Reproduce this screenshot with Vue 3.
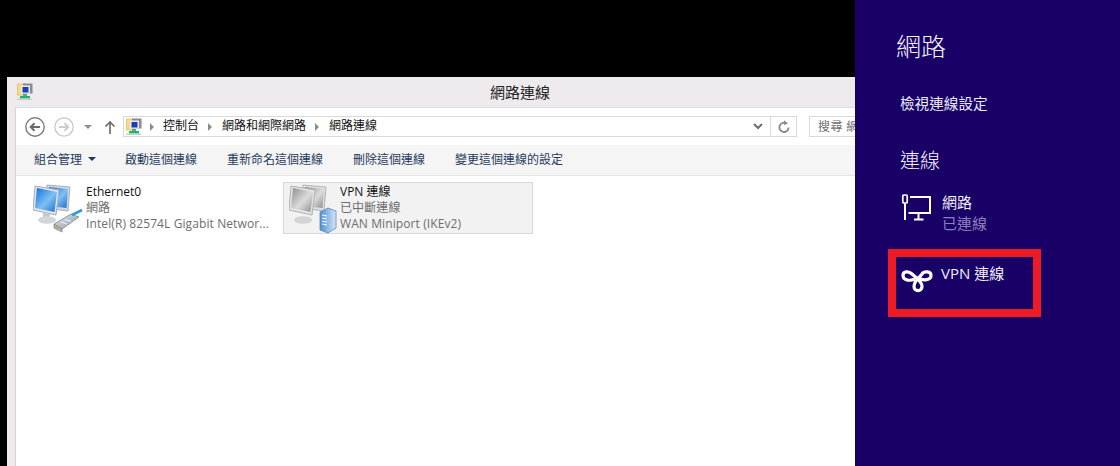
<script setup>
const cmds = ['啟動這個連線', '重新命名這個連線', '刪除這個連線', '變更這個連線的設定']
</script>

<template>
  <div class="screen">
    <div class="left">
      <div class="window">
        <div class="titlebar">
          <svg class="appicon" width="16" height="17" viewBox="0 0 16 17">
            <rect x="0.5" y="1" width="8" height="11" fill="#f6dd85" stroke="#d9b95a" stroke-width="0.7" />
            <rect x="6" y="0.5" width="9.5" height="10" fill="#8a8a94" />
            <rect x="4" y="2.5" width="9" height="8" fill="#e8ecf2" />
            <rect x="5.5" y="4" width="6" height="5.5" fill="#1a3fb4" />
            <rect x="6" y="11" width="4" height="2" fill="#5a8" />
            <rect x="3" y="13" width="10" height="2.5" fill="#1fb36b" />
            <rect x="0" y="15.5" width="15" height="1.5" fill="#c8ccd0" />
          </svg>
          <span class="title">網路連線</span>
        </div>
        <div class="client">
          <div class="navbar">
            <svg class="nav-back" width="22" height="22" viewBox="0 0 22 22">
              <circle cx="11" cy="11" r="9.2" fill="#fff" stroke="#7c7c7c" stroke-width="1.4" />
              <path d="M16 11H7M10.5 7.2 6.7 11l3.8 3.8" fill="none" stroke="#6a6a6a" stroke-width="2" />
            </svg>
            <svg class="nav-fwd" width="22" height="22" viewBox="0 0 22 22">
              <circle cx="11" cy="11" r="9.2" fill="#fff" stroke="#c8c8c8" stroke-width="1.3" />
              <path d="M6 11h9M11.5 7.2 15.3 11l-3.8 3.8" fill="none" stroke="#cdcdcd" stroke-width="2" />
            </svg>
            <span class="nav-drop"></span>
            <svg class="nav-up" width="12" height="14" viewBox="0 0 12 14">
              <path d="M6 14V2M1.5 6.5 6 2l4.5 4.5" fill="none" stroke="#6f6f6f" stroke-width="1.7" />
            </svg>
            <div class="address">
              <svg class="addr-icon" width="16" height="17" viewBox="0 0 16 17">
                <rect x="0.5" y="1" width="8" height="11" fill="#f6dd85" stroke="#d9b95a" stroke-width="0.7" />
                <rect x="6" y="0.5" width="9.5" height="10" fill="#8a8a94" />
                <rect x="4" y="2.5" width="9" height="8" fill="#e8ecf2" />
                <rect x="5.5" y="4" width="6" height="5.5" fill="#1a3fb4" />
                <rect x="3" y="13" width="10" height="2.5" fill="#1fb36b" />
                <rect x="6" y="11" width="4" height="2" fill="#5a8" />
                <rect x="0" y="15.5" width="15" height="1.5" fill="#c8ccd0" />
              </svg>
              <span class="crumb-arrow first"></span>
              <span class="crumb">控制台</span>
              <span class="crumb-arrow"></span>
              <span class="crumb">網路和網際網路</span>
              <span class="crumb-arrow"></span>
              <span class="crumb">網路連線</span>
              <span class="addr-space"></span>
              <span class="addr-btn">
                <svg width="10" height="7" viewBox="0 0 10 7"><path d="M1 1l4 4 4-4" fill="none" stroke="#6d6d6d" stroke-width="2" /></svg>
              </span>
              <span class="addr-btn refresh">
                <svg width="12" height="13" viewBox="0 0 12 13">
                  <path d="M8.6 3.6A4.6 4.6 0 1 0 10.6 7.4" fill="none" stroke="#8a8a8a" stroke-width="1.8" />
                  <path d="M6 0.2 10 3.5 6 5z" fill="#8a8a8a" />
                </svg>
              </span>
            </div>
            <div class="search">搜尋 網路連線</div>
          </div>
          <div class="cmdbar">
            <span class="cmd organize">組合管理<i class="caret"></i></span>
            <span v-for="c in cmds" :key="c" class="cmd">{{ c }}</span>
          </div>
          <div class="items">
            <div class="item">
              <svg class="item-icon" width="54" height="50" viewBox="0 0 54 50">
                <defs>
                  <linearGradient id="scr" x1="0" y1="0" x2="1" y2="1">
                    <stop offset="0" stop-color="#0f6fe0" />
                    <stop offset="0.55" stop-color="#7dc0f4" />
                    <stop offset="1" stop-color="#1a6fd0" />
                  </linearGradient>
                  <linearGradient id="plug" x1="0" y1="0" x2="1" y2="1">
                    <stop offset="0" stop-color="#dfe6ec" />
                    <stop offset="1" stop-color="#8f9ca8" />
                  </linearGradient>
                </defs>
                <path d="M14 1 37 3 35 27 12 24z" fill="#d5d8dc" stroke="#aab0b6" />
                <path d="M16 3 35 5 33.5 24 15 22z" fill="url(#scr)" />
                <path d="M2 2 26 6 23 31 0 26z" fill="#e2e4e6" stroke="#a8aeb4" />
                <path d="M4 4 24 8 21.5 28 2 24z" fill="url(#scr)" />
                <path d="M10 29 17 30 16 35 10 34z" fill="#c5c8cb" />
                <ellipse cx="14" cy="36" rx="9" ry="3.800" fill="#d4d6d8" />
                <path d="M21 40 38 30 46 33 29 45z" fill="url(#plug)" stroke="#7d8994" stroke-width="0.8" />
                <path d="M21 40 21 44 29 48 29 45z" fill="#aab5bf" stroke="#7d8994" stroke-width="0.8" />
                <path d="M23 42.500l3 1.500" stroke="#c7a93f" stroke-width="2" />
                <path d="M28 38l6 2M32 35.500l6 2" stroke="#f4f6f8" stroke-width="1" />
                <path d="M39 31 49 26" stroke="#2a9cd8" stroke-width="2.600" />
              </svg>
              <div class="item-text">
                <div class="item-name">Ethernet0</div>
                <div class="item-sub">網路</div>
                <div class="item-sub">Intel(R) 82574L Gigabit Networ...</div>
              </div>
            </div>
            <div class="item selected">
              <svg class="item-icon" width="54" height="50" viewBox="0 0 54 50">
                <defs>
                  <linearGradient id="gscr" x1="0" y1="0" x2="1" y2="1">
                    <stop offset="0" stop-color="#8b8b8b" />
                    <stop offset="0.55" stop-color="#dcdcdc" />
                    <stop offset="1" stop-color="#8d8d8d" />
                  </linearGradient>
                  <linearGradient id="srv" x1="0" y1="0" x2="1" y2="0">
                    <stop offset="0" stop-color="#4f8fd2" />
                    <stop offset="1" stop-color="#d5e6f6" />
                  </linearGradient>
                </defs>
                <path d="M14 1 37 3 35 27 12 24z" fill="#dedede" stroke="#b4b4b4" />
                <path d="M16 3 35 5 33.5 24 15 22z" fill="url(#gscr)" />
                <path d="M2 2 26 6 23 31 0 26z" fill="#e5e5e5" stroke="#b0b0b0" />
                <path d="M4 4 24 8 21.5 28 2 24z" fill="url(#gscr)" />
                <ellipse cx="14" cy="36" rx="9" ry="3.800" fill="#d4d4d4" />
                <path d="M31 28 39 24 47 27V44L39 49 31 46z" fill="url(#srv)" stroke="#5d89b5" stroke-width="0.8" />
                <path d="M33 31l5 1M33 34l5 1M33 37l5 1M33 40l5 1" stroke="#fff" stroke-width="1" />
              </svg>
              <div class="item-text">
                <div class="item-name">VPN 連線</div>
                <div class="item-sub">已中斷連線</div>
                <div class="item-sub">WAN Miniport (IKEv2)</div>
              </div>
            </div>
          </div>
        </div>
      </div>
    </div>
    <aside class="charm">
      <h1 class="charm-title">網路</h1>
      <div class="charm-link">檢視連線設定</div>
      <h2 class="charm-section">連線</h2>
      <div class="conn">
        <svg class="conn-icon" width="32" height="27" viewBox="0 0 32 27">
          <path d="M5 9V26" fill="none" stroke="#fff" stroke-width="2" />
          <rect x="2.800" y="1" width="4.400" height="8" rx="1" fill="none" stroke="#fff" stroke-width="1.700" />
          <path d="M10 3H30V19H8.500" fill="none" stroke="#fff" stroke-width="2" />
          <path d="M18.500 19v6M14 25.500h9.500" fill="none" stroke="#fff" stroke-width="2" />
        </svg>
        <div class="conn-text">
          <div class="conn-name">網路</div>
          <div class="conn-state">已連線</div>
        </div>
      </div>
      <div class="vpn">
        <svg class="vpn-icon" width="32" height="24" viewBox="0 0 32 24">
          <path d="M14 9C10 11 2 11 2 5.500 2 1 8 1 11 4 14 7 21 11 21 16.500 21 22 13 22 13 16.500 13 11 18 8 21 4 23 1 30 1 30 5.500 30 10.500 22 10.500 18 8.500" fill="none" stroke="#fff" stroke-width="3.200" />
        </svg>
        <div class="vpn-name">VPN 連線</div>
      </div>
    </aside>
  </div>
</template>

<style scoped>
.screen {
  display: flex;
  width: 1120px;
  height: 466px;
  overflow: hidden;
  background: #000;
  font-family: "Noto Sans CJK TC", "Liberation Sans", sans-serif;
}
.left {
  flex: 1;
  min-width: 0;
  padding: 77px 0 0 7px;
}
.window {
  display: flex;
  flex-direction: column;
  height: 389px;
  background: #eeeaee;
}
.titlebar {
  position: relative;
  height: 30px;
  flex: none;
  display: flex;
  align-items: center;
  justify-content: center;
}
.appicon {
  position: absolute;
  left: 10px;
  top: 6px;
}
.title {
  font-size: 15px;
  line-height: 20px;
  color: #222;
  margin-left: 178px;
  margin-bottom: 1px;
}
.client {
  flex: 1;
  margin-left: 8px;
  background: #fff;
  border-left: 1px solid #d5d3d6;
  border-top: 1px solid #e0dde0;
  display: flex;
  flex-direction: column;
  min-height: 0;
}
.navbar {
  height: 37px;
  flex: none;
  display: flex;
  align-items: center;
  padding-left: 8px;
  overflow: hidden;
}
.nav-back, .nav-fwd, .nav-drop, .nav-up { flex: none; }
.nav-fwd { margin-left: 7px; }
.nav-drop {
  width: 0;
  height: 0;
  margin-left: 9px;
  border-left: 4px solid transparent;
  border-right: 4px solid transparent;
  border-top: 4px solid #8f8f8f;
}
.nav-up { margin-left: 12px; }
.address {
  margin-left: 7px;
  width: 674px;
  height: 21px;
  box-sizing: border-box;
  border: 1px solid #d9d9d9;
  display: flex;
  align-items: center;
  flex: none;
  background: #fff;
}
.addr-icon { margin-left: 2px; margin-top: -1px; flex: none; }
.crumb {
  font-size: 12px;
  color: #111;
  line-height: 19px;
  margin-top: -4px;
}
.crumb-arrow {
  width: 0;
  height: 0;
  margin: 0 10px 0 9px;
  border-top: 4px solid transparent;
  border-bottom: 4px solid transparent;
  border-left: 4px solid #8b8b8b;
}
.crumb-arrow.first { margin: 0 9px 0 8px; }
.addr-space { flex: 1; }
.addr-btn {
  width: 25px;
  height: 19px;
  display: flex;
  align-items: center;
  justify-content: center;
}
.addr-btn.refresh {
  border-left: 1px solid #d9d9d9;
}
.search {
  margin-left: 12px;
  flex: none;
  width: 120px;
  height: 21px;
  box-sizing: border-box;
  border: 1px solid #d9d9d9;
  padding-left: 8px;
  font-size: 12px;
  line-height: 17px;
  color: #6d6d6d;
  white-space: nowrap;
  letter-spacing: 0.5px;
}
.cmdbar {
  height: 31px;
  flex: none;
  box-sizing: border-box;
  background: #f5f5f5;
  border-bottom: 1px solid #e6e6e6;
  display: flex;
  align-items: center;
  padding: 0 0 3px 18px;
  gap: 30px;
}
.cmd {
  font-size: 12px;
  color: #1e395b;
  white-space: nowrap;
}
.organize {
  display: flex;
  align-items: center;
  margin-right: -1px;
}
.caret {
  width: 0;
  height: 0;
  margin-left: 6px;
  border-left: 4px solid transparent;
  border-right: 4px solid transparent;
  border-top: 4px solid #1e395b;
}
.items {
  flex: 1;
  display: flex;
  align-items: flex-start;
  padding: 6px 0 0 11px;
  gap: 6px;
}
.item {
  width: 250px;
  height: 52px;
  box-sizing: border-box;
  display: flex;
  border: 1px solid transparent;
  flex: none;
}
.item.selected {
  background: #f2f2f2;
  border-color: #d9d9d9;
}
.item-icon {
  flex: none;
  margin: 1px 0 0 5px;
}
.item-text {
  margin-left: -1px;
  padding-top: 1px;
}
.item.selected .item-text { margin-left: -3px; }
.item-name {
  font-size: 12px;
  line-height: 16px;
  color: #111;
  white-space: nowrap;
  font-family: "Open Sans", "Noto Sans CJK TC", sans-serif;
}
.item-sub {
  font-size: 12px;
  line-height: 16px;
  color: #6d6d6d;
  white-space: nowrap;
  letter-spacing: 0.1px;
  font-family: "Open Sans", "Noto Sans CJK TC", sans-serif;
}
.charm {
  flex: none;
  width: 265px;
  box-sizing: border-box;
  background: #180066;
  padding: 28px 0 0 41px;
  color: #fff;
}
.charm-title {
  margin: 0;
  font-size: 25px;
  line-height: 34px;
  font-weight: 300;
  color: #f4f2fa;
}
.charm-link {
  margin: 31px 0 0 4px;
  font-size: 14.600px;
  line-height: 20px;
  color: #ece9f6;
}
.charm-section {
  margin: 33px 0 0 4px;
  font-size: 20px;
  line-height: 28px;
  font-weight: 300;
  color: #f4f2fa;
}
.conn {
  display: flex;
  margin: 18px 0 0 4px;
  height: 46px;
}
.conn-icon {
  margin-top: 2px;
  flex: none;
}
.conn-text { margin-left: 10px; }
.conn-name {
  font-size: 15px;
  line-height: 20px;
  color: #f0eef8;
}
.conn-state {
  font-size: 15px;
  line-height: 22px;
  color: #8d80bd;
}
.vpn {
  margin: 11px 0 0 -8px;
  width: 153px;
  height: 68px;
  box-sizing: border-box;
  border: 8px solid #ed1c24;
  display: flex;
}
.vpn-icon {
  flex: none;
  margin: 13px 0 0 5px;
}
.vpn-name {
  margin: 6px 0 0 8px;
  font-size: 15px;
  line-height: 20px;
  color: #f0eef8;
  font-family: "Open Sans", "Noto Sans CJK TC", sans-serif;
}
</style>
